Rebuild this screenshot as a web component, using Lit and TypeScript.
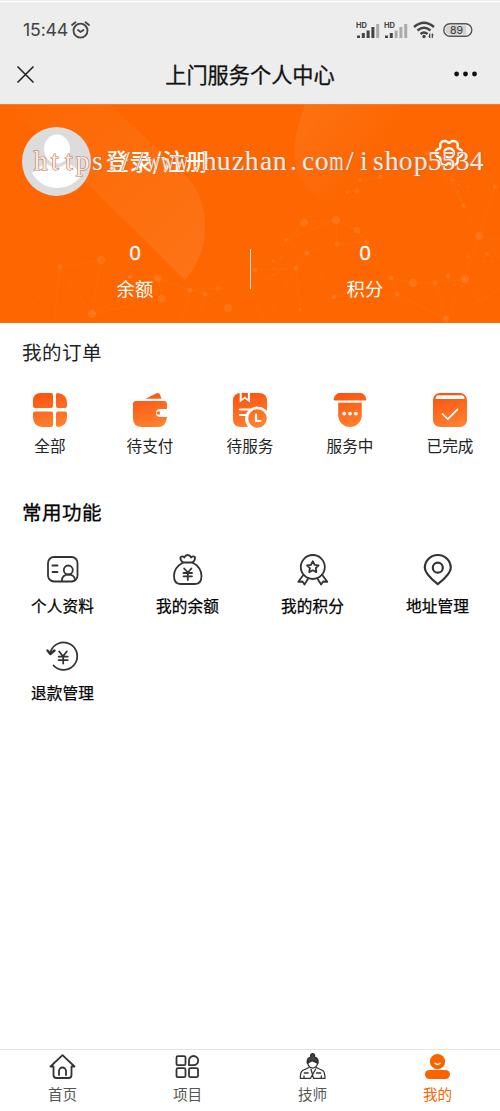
import { LitElement, html, svg, css } from "lit";
import { customElement } from "lit/decorators.js";
import { classMap } from "lit/directives/class-map.js";

const orderItems = [
  {
    label: "全部",
    icon: svg`<path d="M7 0H18a2 2 0 0 1 2 2V13a2 2 0 0 1-2 2H2a2 2 0 0 1-2-2V8Q0 0 8 0Z"/>
      <path d="M24.500 0Q34 1 34 10V13a2 2 0 0 1-2 2H25a2 2 0 0 1-2-2V1.500Q23 0 24.500 0Z"/>
      <path d="M2 18.500H18a2 2 0 0 1 2 2V32a2 2 0 0 1-2 2H9Q0 33 0 24V20.500a2 2 0 0 1 2-2Z"/>
      <path d="M25 18.500H32a2 2 0 0 1 2 2V24Q34 33 25 34a2 2 0 0 1-2-2V20.500a2 2 0 0 1 2-2Z"/>`,
  },
  {
    label: "待支付",
    icon: svg`<path d="M12.500 5.700 23.500.3Q26-.6 27.200 2L28.500 5.700Z"/>
      <path d="M3 8H31a3 3 0 0 1 3 3V16H27a4 4 0 0 0 0 8H34Q33 34 25 34H9Q0 34 0 25V11a3 3 0 0 1 3-3Z"/>
      <circle cx="25.500" cy="20" r="1.700"/>`,
  },
  {
    label: "待服务",
    icon: svg`<path d="M8 0H26Q34 0 34 8V18A12 12 0 0 0 15 34H8Q0 34 0 26V8Q0 0 8 0Z"/>
      <path d="M6.700-.2V9.500L11.700 5.800 17 9.500V-.2H14.900V6L11.700 3.600 8.700 6V-.2Z" fill="#fff"/>
      <path d="M7 16.500H17M7 22H13" stroke="#fff" stroke-width="2.200" stroke-linecap="round"/>
      <circle cx="24.500" cy="25.500" r="11.500" fill="#fff"/><circle cx="24.500" cy="25.500" r="9.300"/>
      <path d="M23 21.500V28H27.500" fill="none" stroke="#fff" stroke-width="2.200" stroke-linecap="round"/>`,
  },
  {
    label: "服务中",
    icon: svg`<path d="M7 0H27Q31.500 0 33.200 5.500 34 7.500 31.500 7.500H2.500Q0 7.500 .8 5.500 2.500 0 7 0Z"/>
      <path d="M5.200 9.700H28.800V22A11.800 12 0 0 1 5.200 22Z"/>
      <g fill="#fff"><circle cx="11.200" cy="20.600" r="1.900"/><circle cx="17" cy="20.600" r="1.900"/><circle cx="22.800" cy="20.600" r="1.900"/></g>`,
  },
  {
    label: "已完成",
    icon: svg`<rect width="34" height="34" rx="7"/>
      <path d="M5.500 2.300H28.500Q31.500 2.300 31.500 5.900H2.500Q2.500 2.300 5.500 2.300Z" fill="#fff"/>
      <path d="M9.500 21 14.800 26 24.500 16.300" fill="none" stroke="#fff" stroke-width="1.700" stroke-linecap="round"/>`,
  },
];

const toolItems = [
  {
    label: "个人资料",
    icon: svg`<rect x="2" y="5" width="29.500" height="24.500" rx="6"/>
      <path d="M6.500 13.500H11.500M6.500 20H11.500"/><circle cx="22.300" cy="18" r="4.500"/>
      <path d="M15.800 29Q16 22.600 22.300 22.600 28.300 22.600 29 27.500"/>`,
  },
  {
    label: "我的余额",
    icon: svg`<path d="M12 10.500Q9 8 9.500 5.200 11.500 3.500 13.200 5.500 14.500 3 16.700 3 19 3 20.200 5.500 22 3.500 24 5.200 24.500 8 21.500 10.500Z"/>
      <path d="M12 10.500Q3 15.500 3 24 3 32 9.500 32H24Q30.500 32 30.500 24 30.500 15.500 21.500 10.500"/>
      <path d="M13.200 16.500 16.800 20.500 20.400 16.500M12.500 21H21M12.500 24.300H21M16.800 20.500V28"/>`,
  },
  {
    label: "我的积分",
    icon: svg`<circle cx="16.800" cy="15" r="12"/>
      <path d="M16.800 9.200 18.600 12.800 22.600 13.400 19.700 16.200 20.400 20.200 16.800 18.300 13.200 20.200 13.900 16.200 11 13.400 15 12.800Z"/>
      <path d="M7.500 22.700 2.300 29.800 6.500 29.500 8.500 32.500 12.500 26M26.100 22.700 31.300 29.800 27.100 29.500 25.100 32.500 21.100 26"/>`,
  },
  {
    label: "地址管理",
    icon: svg`<path d="M16.800 32.200Q3.800 22 3.800 15.800A13 12.800 0 0 1 29.800 15.800Q29.800 22 16.800 32.200Z" stroke-width="2.200"/>
      <circle cx="16.800" cy="15.700" r="5" stroke-width="2.200"/>`,
  },
  {
    label: "退款管理",
    icon: svg`<path d="M4.500 13A13.700 13.700 0 1 1 7.500 26.500"/><path d="M1.500 11.500 4.300 15 8.500 11.500" stroke-width="2.400"/>
      <path d="M13.200 12.500 17 17.200 20.800 12.500M12.700 17.700H21.700M12.700 21.200H21.700M17.200 17.500V24.500"/>`,
  },
];

const tabItems = [
  {
    label: "首页",
    active: false,
    icon: svg`<path d="M4.500 13.500H1.500L13.500 2.200 25.500 13.500H22.500V22Q22.500 25 19.500 25H7.500Q4.500 25 4.500 22Z"/><path d="M10 22V18a3.500 3.500 0 0 1 7 0V22"/>`,
  },
  {
    label: "项目",
    active: false,
    icon: svg`<rect x="2.500" y="3.200" width="9" height="9" rx="1.500"/><rect x="2.500" y="15.200" width="9" height="9" rx="1.500"/>
      <rect x="15" y="15.200" width="9" height="9" rx="1.500"/><path d="M15 12.200V7.700A4.600 4.600 0 1 1 19.600 12.200Z"/>`,
  },
  {
    label: "技师",
    active: false,
    icon: svg`<path d="M8.500 10Q8 5 11.800 4 11.500 1 13.600 1 15.700 1 15.400 4 19.500 5.500 18.800 10L13 7.500Z" fill="#444"/>
      <path d="M8.700 9.500Q9 14.500 13.600 15.200 18.200 14.500 18.600 9.500" stroke-width="1.300"/>
      <path d="M10 14.500 3.500 17.500Q1.300 19 1.300 25.300H11.500L16.700 16M17.200 14.500 23.700 17.500Q26 19 26 25.300H14.500L12 16.200M5 23V25M22.300 23V25" stroke-width="1.300"/><path d="M5.500 20H9M17.800 20H21.500" stroke-width="1.700"/>`,
  },
  {
    label: "我的",
    active: true,
    icon: svg`<g fill="#fa6400" stroke="none"><circle cx="13.500" cy="8.700" r="7.600"/><rect x="1" y="17" width="25" height="9" rx="4.500"/></g>
      <path d="M11 10.200Q13.500 12.600 16 10.200" stroke="#fff" stroke-width="1.500"/>`,
  },
];

const meshDots: number[][] = [
  [60, 62, 2.5], [101, 55, 4], [130, 72, 2.5], [158, 73, 4], [162, 94, 4], [92, 109, 4], [190, 85, 2.5], [205, 89, 2.5],
  [218, 83, 2.5], [228, 103, 4], [255, 65, 2.5], [273, 56, 1.5], [286, 35, 2.5], [304, 18, 4], [336, 15, 4], [357, 25, 3.5],
  [367, 37, 2.5], [337, 39, 2.5], [307, 48, 2.5], [296, 63, 2.5], [334, 92, 2.5], [300, 105, 2], [391, 73, 2.5],
  [413, 78, 4.2], [397, 89, 2.5], [435, 78, 2.5], [448, 71, 2.5], [465, 74, 4], [446, 114, 3.2], [479, 31, 4.2],
  [464, 1, 2.5], [495, -18, 2.5], [468, 52, 2], [487, 49, 2], [357, -14, 2.5], [380, -28, 2.5], [360, -25, 2], [452, -25, 2],
  [427, -52, 2.5], [347, -13, 1.5], [274, 63, 1], [264, 73, 1], [274, 70, 1], [281, 53, 1], [459, -20, 1], [467, -18, 1],
  [458, -13, 1], [455, 80, 1], [462, 81, 1], [485, 56, 1], [493, 56, 1],
];

/** Closed outline of a cog with six soft teeth, centred on (15, 15). */
const cogPath = (() => {
  const points = Array.from({ length: 72 }, (_, i) => {
    const a = (i / 72) * Math.PI * 2;
    const r = 12 + 1.5 * Math.cos(6 * a) - 0.3 * Math.cos(12 * a);
    return `${(15 + r * Math.cos(a)).toFixed(2)} ${(15 + r * Math.sin(a)).toFixed(2)}`;
  });
  return `M${points.join("L")}Z`;
})();

@customElement("app-root")
export class AppRoot extends LitElement {
  static styles = css`
    :host {
      display: flex;
      flex-direction: column;
      box-sizing: border-box;
      height: 1111px;
      background: #fff;
      color: #222;
      font-family: "Noto Sans CJK SC", sans-serif;
      overflow: hidden;
    }
    svg { display: block; flex: none; overflow: visible; }
    .top { height: 104px; background: #ededed; flex: none; box-sizing: border-box; border-top: 1px solid #ededed; box-shadow: inset 0 1px #fff; }
    .status { display: flex; justify-content: space-between; height: 43px; padding: 7px 27px 0 23px; align-items: center; }
    .clock { display: flex; align-items: center; gap: 3px; font: 17.800px/24px Inter, sans-serif; color: #444; letter-spacing: -0.2px; }
    .signals { display: flex; align-items: center; }
    .nav { display: grid; grid-template-columns: 60px 1fr 60px; align-items: center; height: 34px; margin-top: 6px; }
    .nav h1 { margin: -1px 0 0; text-align: center; font-size: 21.2px; font-weight: 400; line-height: 34px; color: #111; -webkit-text-stroke: 0.3px #111; }
    .close { padding-left: 17px; }
    .more { padding-left: 14px; }
    .hero { position: relative; height: 219px; flex: none; background: #fd6600; color: #fff; overflow: hidden; border-top: 1px solid #f57c2c; box-sizing: border-box; }
    .art { position: absolute; left: 0; top: 0; }
    .profile { position: relative; display: flex; align-items: flex-start; padding: 22px 36px 0 22px; height: 90px; }
    .login { font-size: 23px; line-height: 30px; letter-spacing: 0.4px; margin: 18px auto 0 15px; font-weight: 500; }
    .gear { margin-top: 11px; }
    .stats { position: relative; display: grid; grid-template-columns: 230px 230px; justify-content: center; text-align: center; }
    .stat { padding-top: 21px; height: 60px; }
    .num { font: 400 20.500px/28px "Noto Sans", sans-serif; -webkit-text-stroke: 0.3px #fff; }
    .cap { font-size: 18.300px; line-height: 26px; margin-top: 9px; letter-spacing: 0.2px; }
    .divider { position: absolute; left: 250px; top: 32px; width: 1px; height: 40px; background: #ffe0c8; }
    .mark { position: absolute; left: 34px; top: 39px; display: flex; font: 27px/34px "Liberation Serif", serif; color: #ffe9dc; -webkit-text-stroke: 1.100px #ae7a5c; paint-order: stroke fill; }
    .mark span { width: 14.060px; display: flex; justify-content: center; }
    .mark b { font-weight: 400; transform: scaleX(1.02); }
    .mark .wide b { transform: scaleX(0.68); }
    .section h2 { margin: 0; font-size: 19.500px; line-height: 28px; letter-spacing: 0.5px; font-weight: 400; padding-left: 22px; color: #222; }
    .orders { padding-top: 15px; height: 143px; }
    .tools { padding-top: 17px; flex: 1; }
    .section.tools h2 { color: #000; -webkit-text-stroke: 0.3px #000; }
    .row { display: grid; grid-template-columns: repeat(5, 1fr); margin-top: 27px; }
    .grid { display: grid; grid-template-columns: repeat(4, 1fr); margin-top: 26px; row-gap: 20px; }
    .item { display: flex; flex-direction: column; align-items: center; font-size: 15.600px; line-height: 24px; letter-spacing: 0.100px; }
    .row .item { gap: 6px; color: #222; }
    .grid .item { gap: 7px; color: #000; -webkit-text-stroke: 0.250px #000; height: 66.500px; }
    .line { fill: none; stroke: #333; stroke-width: 1.800; stroke-linejoin: round; stroke-linecap: round; }
    .tabs { display: grid; grid-template-columns: repeat(4, 1fr); height: 62px; box-sizing: border-box; border-top: 1px solid #e4e4e4; flex: none; }
    .tab { display: flex; flex-direction: column; align-items: center; padding-top: 3px; gap: 3px; font-size: 14.600px; line-height: 22px; color: #555; }
    .active { color: #fa6400; }
  `;

  private bars(strong: number) {
    return svg`${[0, 1, 2, 3, 4].map(
      (i) => svg`<rect x=${1 + i * 4.8} y=${[15.5, 13, 10.5, 7, 4][i]} width="3" height=${[2.5, 5, 7.5, 11, 14][i]} fill=${i < strong ? "#444" : "#aaa"}/>`
    )}<text x="0" y="8" font-family="Inter" font-size="7.500" font-weight="700" fill="#444">HD</text>`;
  }

  render() {
    return html`
      <header class="top">
        <div class="status">
          <div class="clock">
            15:44
            <svg width="19" height="18" viewBox="0 0 19 18" fill="none" stroke="#444" stroke-width="1.800" stroke-linecap="round">
              <circle cx="9.500" cy="9.700" r="7"/><path d="M7 9 9.500 11 12.500 9M1 4 4.500 1.300M18 4 14.500 1.300"/>
            </svg>
          </div>
          <div class="signals">
            <svg width="28" height="19" viewBox="0 0 28 19">${this.bars(4)}</svg>
            <svg width="29" height="19" viewBox="0 0 29 19">${this.bars(2)}</svg>
            <svg width="30" height="18" viewBox="0 0 30 18" fill="none" stroke="#444" stroke-width="2.400">
              <path d="M1 6Q11-2.500 21 6M4.500 9.500Q11 4 17.500 9.500M7.500 13Q11 10 14.500 13"/>
              <circle cx="11" cy="15.500" r="1.700" fill="#444" stroke="none"/>
              <path d="M16.700 12.500V17M19.300 12.500V17M15.500 15.500H17M19 14H20.500" stroke-width="1.200"/>
            </svg>
            <svg width="30" height="14" viewBox="0 0 30 14">
              <rect x=".8" y=".8" width="28" height="12.400" rx="6.200" fill="#ededed" stroke="#555" stroke-width="1.400"/>
              <path d="M7 2.500H23V11.500H7A4.500 4.500 0 0 1 7 2.500Z" fill="#d2d2d2"/>
              <text x="13.500" y="10.800" text-anchor="middle" font-family="Inter" font-size="10.500" fill="#333">89</text>
            </svg>
          </div>
        </div>
        <div class="nav">
          <div class="close">
            <svg width="17" height="17" viewBox="0 0 17 17" stroke="#222" stroke-width="1.600"><path d="M.5.5 16.500 16.500M16.500.5.5 16.500"/></svg>
          </div>
          <h1>上门服务个人中心</h1>
          <div class="more">
            <svg width="24" height="6" viewBox="0 0 24 6" fill="#111"><circle cx="2.600" cy="3" r="2.400"/><circle cx="11.500" cy="3" r="2.400"/><circle cx="20.500" cy="3" r="2.400"/></svg>
          </div>
        </div>
      </header>

      <section class="hero">
        <svg class="art" width="500" height="218" viewBox="0 0 500 218">
          <defs>
            <linearGradient id="beam" x1="0" y1="0" x2="1" y2="1"><stop offset="0" stop-color="#fff" stop-opacity="0.010"/><stop offset="1" stop-color="#fff" stop-opacity="0.090"/></linearGradient>
            <linearGradient id="ball" x1="0" y1="0" x2=".75" y2=".6"><stop offset="0" stop-color="#fff" stop-opacity="0.080"/><stop offset="1" stop-color="#fff" stop-opacity="0"/></linearGradient>
          </defs>
          <path d="M8 0H111L188 73Q206 94 205 125 204 153 185 175Z" fill="url(#beam)"/>
          <path d="M305 0Q294 30 294 48A54 54 0 0 0 402 48V0Z" fill="url(#ball)"/>
          <g transform="translate(0 100)" fill="#fff" stroke="#fff">
            <path fill="none" stroke-opacity=".06" stroke-width=".8" d="M20 117 60 62 101 55 92 109 60 62M60 62 54 117M92 109 158 73 130 72 162 94 158 73 190 85 205 89 228 103 240 118M190 85 218 83 255 83M92 109 162 94 145 118M190 85 180 118M205 89 195 118M228 103 210 118M255 65 286 35 304 18 336 15 357 25 367 37 337 39 336 15 286 35M255 65 296 63 307 48 286 35M307 48 337 39M307 48 334 92 300 105 296 63 266 118 250 85 307 48M334 92 391 73 413 78 435 78 465 74 446 114 435 78M367 37 391 73 397 89 334 92M397 89 446 114M397 89 380 118M397 89 420 118M413 78 397 89M465 74 500 105M465 74 495 118M446 114 500 84M479 31 464 74M479 31 500 35M479 31 495-18 490-30M479 31 464 1 440-35 452-25 467-22M464 1 452-25M357-14 347-13M360-25 380-28M427-52 452-25M479 31 500 52M448 71 465 74"/>
            <g stroke="none" fill-opacity=".085">${meshDots.map(([x, y, r]) => svg`<circle cx=${x} cy=${y} r=${r}/>`)}</g>
          </g>
        </svg>
        <div class="profile">
          <svg width="69" height="69" viewBox="0 0 69 69">
            <circle cx="34.500" cy="34.500" r="34.500" fill="#dcdcdc"/>
            <path d="M10 46Q18 39 24 36 34.500 45 45 36 53 39 60 48 50 61 34.500 61 18 60 10 46Z" fill="#fff"/>
            <ellipse cx="35" cy="22" rx="13" ry="14.500" fill="#fff"/><path d="M24 32Q35 45 46 32" fill="none" stroke="#dcdcdc" stroke-width="1.500"/>
          </svg>
          <div class="login">登录/注册</div>
          <svg class="gear" width="30" height="30" viewBox="0 0 30 30" fill="none" stroke="#fff" stroke-width="2.400" stroke-linejoin="round">
            <path d=${cogPath}/>
            <circle cx="15" cy="15" r="4.800"/>
          </svg>
        </div>
        <div class="stats">
          <div class="stat"><div class="num">0</div><div class="cap">余额</div></div>
          <div class="stat"><div class="num">0</div><div class="cap">积分</div></div>
          <div class="divider"></div>
        </div>
        <div class="mark">${[..."https://www.huzhan.com/ishop5534"].map(
          (c) => html`<span class=${classMap({ wide: c === "w" || c === "m" })}><b>${c}</b></span>`
        )}</div>
      </section>

      <section class="section orders">
        <h2>我的订单</h2>
        <div class="row">
          ${orderItems.map(
            (o, i) => html`<div class="item">
              <svg width="34" height="34" viewBox="0 0 34 34">
                <defs><linearGradient id="g${i}" gradientUnits="userSpaceOnUse" x1="12" y1="0" x2="22" y2="34"><stop offset="0" stop-color="#fb5411"/><stop offset="1" stop-color="#ff8230"/></linearGradient></defs>
                <g fill="url(#g${i})">${o.icon}</g>
              </svg>${o.label}
            </div>`
          )}
        </div>
      </section>

      <section class="section tools">
        <h2>常用功能</h2>
        <div class="grid">
          ${toolItems.map((t) => html`<div class="item"><svg class="line" width="34" height="34" viewBox="0 0 34 34">${t.icon}</svg>${t.label}</div>`)}
        </div>
      </section>

      <nav class="tabs">
        ${tabItems.map(
          (t) => html`<div class=${classMap({ tab: true, active: t.active })}>
            <svg class="line" width="27" height="27" viewBox="0 0 27 27">${t.icon}</svg>${t.label}
          </div>`
        )}
      </nav>
    `;
  }
}
